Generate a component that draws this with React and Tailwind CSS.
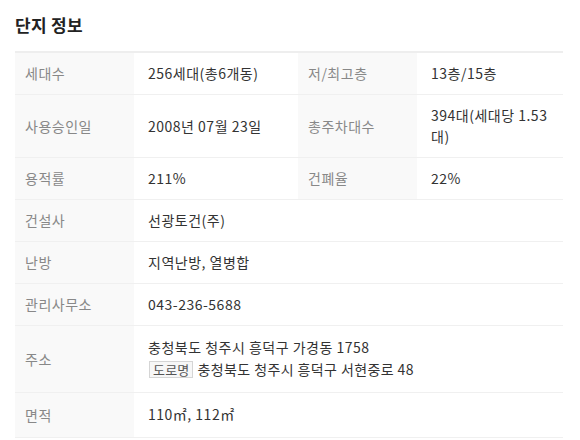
import React from 'react'

const rows = [
    [['세대수', '256세대(총6개동)'], ['저/최고층', '13층/15층']],
    [['사용승인일', '2008년 07월 23일'], ['총주차대수', '394대(세대당 1.53 대)']],
    [['용적률', '211%'], ['건폐율', '22%']],
    [['건설사', '선광토건(주)']],
    [['난방', '지역난방, 열병합']],
    [['관리사무소', '043-236-5688']],
]

const Label = ({ children }) => (
    <th className="bg-[#f9f9f9] pl-[10px] pr-2 py-[10px] text-left font-normal text-[#888] align-middle">{children}</th>
)

const Value = ({ children, span }) => (
    <td colSpan={span} className="pl-[14px] pr-[12px] py-[10px] text-[#333] align-middle">{children}</td>
)

export default function App() {
    return (
        <div className="bg-white w-[580px] h-[440px] px-[15px] pt-[13px] text-[14px] leading-[21px] tracking-[0.5px]" style={{ fontFamily: '"Noto Sans CJK KR", "Noto Sans", sans-serif' }}>
            <h2 className="text-[17px] leading-[24px] font-bold text-[#222] tracking-[0.3px] mb-[14px]">단지 정보</h2>
            <table className="w-[548px] table-fixed border-collapse border-t-2 border-[#eeeeee]">
                <colgroup>
                    <col className="w-[119px]" />
                    <col className="w-[164px]" />
                    <col className="w-[119px]" />
                    <col className="w-[146px]" />
                </colgroup>
                <tbody>
                    {rows.map((row, i) => (
                        <tr key={i} className="border-b border-[#f0f0f0]">
                            {row.length === 2 ? (
                                <>
                                    <Label>{row[0][0]}</Label>
                                    <Value>{row[0][1]}</Value>
                                    <Label>{row[1][0]}</Label>
                                    <Value>{row[1][1]}</Value>
                                </>
                            ) : (
                                <>
                                    <Label>{row[0][0]}</Label>
                                    <Value span={3}>{row[0][1]}</Value>
                                </>
                            )}
                        </tr>
                    ))}
                    <tr className="border-b border-[#f0f0f0]">
                        <Label>주소</Label>
                        <td colSpan={3} className="pl-[14px] pr-[14px] pt-[10px] pb-[11px] text-[#333] align-middle">
                            <div className="leading-[22px]">충청북도 청주시 흥덕구 가경동 1758</div>
                            <div className="flex items-center gap-[4px] leading-[23px]">
                                <span className="ml-px border border-[#d5d5d5] bg-[#f7f7f7] px-[3px] text-[13px] leading-[15px] tracking-[0.2px] text-[#555]">도로명</span>
                                <span className="tracking-[0.4px]">충청북도 청주시 흥덕구 서현중로 48</span>
                            </div>
                        </td>
                    </tr>
                    <tr className="border-b border-[#f0f0f0]">
                        <Label>면적</Label>
                        <td colSpan={3} className="pl-[14px] pr-[14px] pt-[11px] pb-[12px] text-[#333] align-middle">110㎡, 112㎡</td>
                    </tr>
                </tbody>
            </table>
        </div>
    )
}
